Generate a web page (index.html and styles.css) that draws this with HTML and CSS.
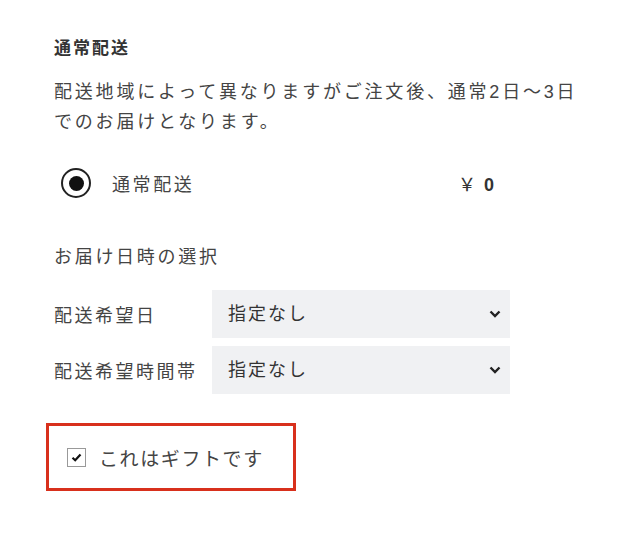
FILE: index.html
```html
<!DOCTYPE html>
<html>
<head>
	<meta charset="utf-8">
	<title>配送方法</title>
	<link rel="stylesheet" href="styles.css">
</head>
<body>
	<div class="delivery">
		<h2 class="ttl">通常配送</h2>
		<p class="desc">配送地域によって異なりますがご注文後、通常2日〜3日でのお届けとなります。</p>

		<label class="method">
			<span class="radio"><span class="dot"></span></span>
			<span class="method-name">通常配送</span>
			<span class="price">￥<b>0</b></span>
		</label>

		<p class="sub">お届け日時の選択</p>

		<div class="row">
			<span class="row-label">配送希望日</span>
			<div class="select-wrap">
				<select class="select">
					<option>指定なし</option>
				</select>
				<svg class="chev" width="12" height="8" viewBox="0 0 12 8"><path d="M1.5 1.5 L6 6 L10.5 1.5" fill="none" stroke="#222" stroke-width="2.4"/></svg>
			</div>
		</div>
		<div class="row">
			<span class="row-label">配送希望時間帯</span>
			<div class="select-wrap">
				<select class="select">
					<option>指定なし</option>
				</select>
				<svg class="chev" width="12" height="8" viewBox="0 0 12 8"><path d="M1.5 1.5 L6 6 L10.5 1.5" fill="none" stroke="#222" stroke-width="2.4"/></svg>
			</div>
		</div>

		<div class="gift">
			<span class="check">
				<svg width="11" height="9" viewBox="0 0 11 9"><path d="M1.5 4.8 L4.2 7.2 L9.5 1.5" fill="none" stroke="#111" stroke-width="2.2"/></svg>
			</span>
			<span class="gift-text">これはギフトです</span>
		</div>
	</div>
</body>
</html>
```

FILE: styles.css
```css
* { margin: 0; padding: 0; box-sizing: border-box; }
body { background: #fff; font-family: "Liberation Sans", "Noto Sans CJK JP", sans-serif; color: #444; }

.delivery { padding: 34px 0 0 54px; }
.ttl { font-size: 17px; line-height: 30px; font-weight: bold; color: #333; letter-spacing: 2px; }
.desc { margin-top: 13px; width: 530px; font-size: 18px; line-height: 30px; letter-spacing: 2.8px; }

.method { display: flex; align-items: center; width: 440px; margin-top: 31px; padding-left: 7px; height: 30px; }
.radio { width: 30px; height: 30px; border: 2px solid #222; border-radius: 50%; display: flex; align-items: center; justify-content: center; }
.dot { width: 15px; height: 15px; background: #111; border-radius: 50%; }
.method-name { flex: 1; margin-left: 21px; font-size: 18px; letter-spacing: 2.6px; }
.price { font-size: 18px; color: #333; }
.price b { margin-left: 8px; }

.sub { margin-top: 44px; font-size: 18px; line-height: 30px; letter-spacing: 2.7px; }

.row { display: flex; align-items: center; margin-top: 8px; }
.sub + .row { margin-top: 18px; }
.row-label { width: 158px; font-size: 18px; letter-spacing: 2.5px; }
.select-wrap { position: relative; width: 298px; }
.select { width: 100%; height: 48px; border: none; appearance: none; -webkit-appearance: none; background: #f0f1f3; padding-left: 16px; font-family: inherit; font-size: 18px; letter-spacing: 2px; color: #333; }
.chev { position: absolute; right: 9px; top: 20px; pointer-events: none; }

.gift { display: flex; align-items: center; width: 250px; height: 68px; margin: 29px 0 0 -8px; border: 3px solid #d8301c; padding-left: 18px; }
.check { width: 19px; height: 19px; border: 1px solid #999; display: flex; align-items: center; justify-content: center; }
.gift-text { margin-left: 13px; font-size: 19px; letter-spacing: 1.6px; color: #444; }
```
